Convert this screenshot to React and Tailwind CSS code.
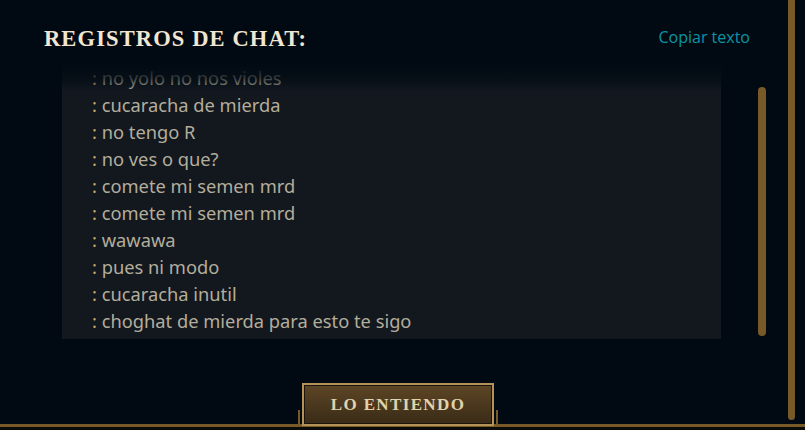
import React from 'react';

const lines = [
  'no yolo no nos violes',
  'cucaracha de mierda',
  'no tengo R',
  'no ves o que?',
  'comete mi semen mrd',
  'comete mi semen mrd',
  'wawawa',
  'pues ni modo',
  'cucaracha inutil',
  'choghat de mierda para esto te sigo',
];

const serif = { fontFamily: '"Liberation Serif", "DejaVu Serif", serif' };

// one chat entry: gold colon, then the message
const ChatLine = ({ text }) => (
  <div className="h-[27px] leading-[27px] whitespace-nowrap">
    <span className="text-[#c8aa6e]">:</span> <span>{text}</span>
  </div>
);

const App = () => {
  return (
    <div className="relative w-[805px] h-[430px] bg-[#010a13] overflow-hidden flex">
      <div className="flex-1 flex flex-col">
        {/* header */}
        <div className="h-[64px] flex items-start justify-between pl-[44px] pr-[38px] pt-[25px]">
          <h1 className="text-[#f0e6d2] text-[22.5px] font-bold tracking-[0.05em] leading-[28px]" style={serif}>
            REGISTROS DE CHAT:
          </h1>
          <button className="text-[#0a95a6] text-[16px] mt-[1px] leading-[22px]" style={{ fontFamily: '"Open Sans", "Noto Sans", sans-serif' }}>
            Copiar texto
          </button>
        </div>

        {/* log + scrollbar */}
        <div className="flex items-start">
          <div
            className="relative ml-[62px] w-[659px] h-[275px] bg-[#12181e] overflow-hidden pl-[30px] text-[18.3px] text-[#b4ad9c]"
            style={{ fontFamily: '"Noto Sans", "Open Sans", sans-serif' }}
          >
            {lines.map((t, i) => (
              <ChatLine key={i} text={t} />
            ))}
            <div className="absolute inset-x-0 top-0 h-[28px] bg-gradient-to-b from-[#010a13] via-[#010a13]/70 to-transparent" />
          </div>
          <div className="ml-[37px] mt-[23px] w-[8px] h-[249px] rounded-full bg-[#785a28]" />
        </div>

        {/* footer button */}
        <div className="flex justify-center mt-[44px] pl-[8px] relative z-10">
          <button
            className="w-[192px] h-[43px] border-2 border-[#b4935a] p-px bg-[#1a140b]"
          >
            <span
              className="flex h-full w-full items-center justify-center bg-gradient-to-b from-[#5c4525] to-[#3b2c17] text-[#e0d3ad] text-[17px] font-bold tracking-[0.08em]"
              style={serif}
            >
              LO ENTIENDO
            </span>
          </button>
        </div>
      </div>

      {/* right frame edge */}
      <div className="w-[7px] h-[420px] bg-[#785a28] rounded-b-[4px] mr-[10px]" />

      {/* bottom frame line with ticks beside the button */}
      <div className="absolute left-0 right-0 bottom-[3px] h-[3px] bg-[#785a28]" />
      <div className="absolute left-0 right-0 bottom-0 h-[3px] bg-[#0b0b0a]" />
      <div className="absolute left-[298px] bottom-[5px] w-[2px] h-[15px] bg-[#785a28]" />
      <div className="absolute left-[496px] bottom-[5px] w-[2px] h-[15px] bg-[#785a28]" />
    </div>
  );
};

export default App;
